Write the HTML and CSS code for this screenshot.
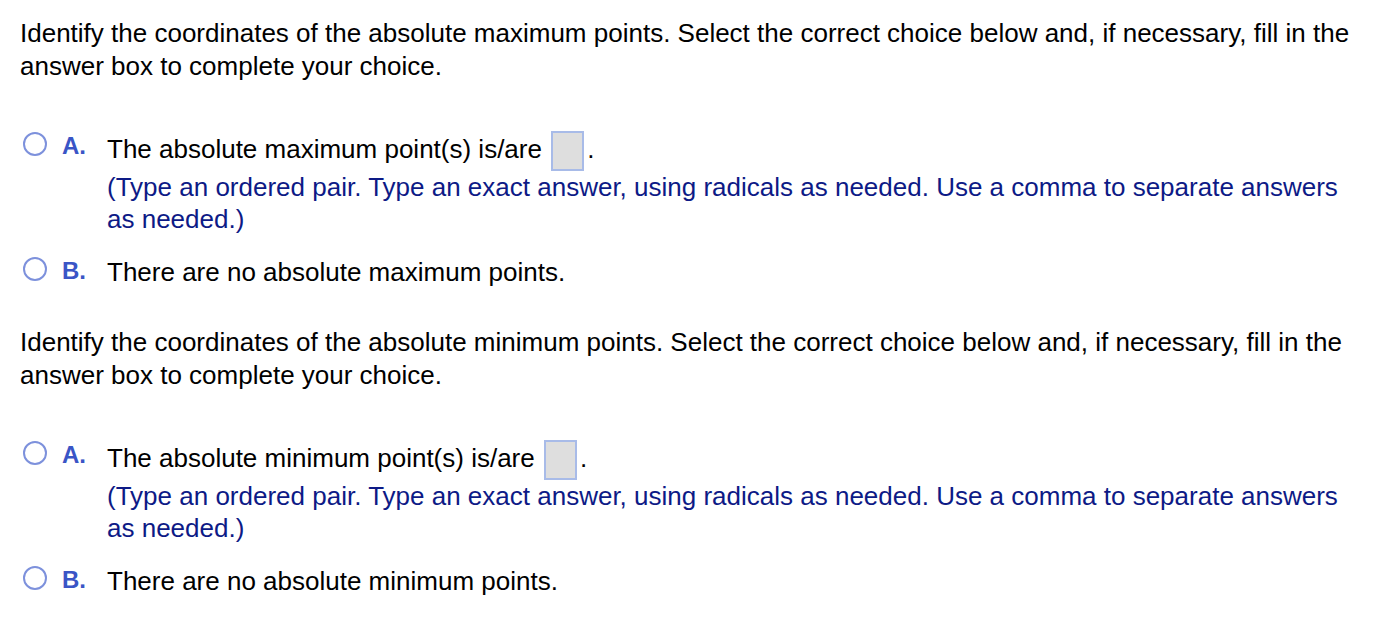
FILE: index.html
```html
<!DOCTYPE html>
<html>
<head>
<meta charset="utf-8">
<link rel="stylesheet" href="styles.css">
</head>
<body>
<div class="page">
  <div class="section">
    <p class="question">Identify the coordinates of the absolute maximum points. Select the correct choice below and, if necessary, fill in the answer box to complete your choice.</p>
    <div class="choices">
      <div class="choice">
        <span class="radio"></span>
        <span class="label">A.</span>
        <div class="content">
          <div class="main">The absolute maximum point(s) is/are <span class="answer-box"></span>.</div>
          <div class="note">(Type an ordered pair. Type an exact answer, using radicals as needed. Use a comma to separate answers as needed.)</div>
        </div>
      </div>
      <div class="choice">
        <span class="radio"></span>
        <span class="label">B.</span>
        <div class="content">
          <div class="main">There are no absolute maximum points.</div>
        </div>
      </div>
    </div>
  </div>
  <div class="section">
    <p class="question">Identify the coordinates of the absolute minimum points. Select the correct choice below and, if necessary, fill in the answer box to complete your choice.</p>
    <div class="choices">
      <div class="choice">
        <span class="radio"></span>
        <span class="label">A.</span>
        <div class="content">
          <div class="main">The absolute minimum point(s) is/are <span class="answer-box"></span>.</div>
          <div class="note">(Type an ordered pair. Type an exact answer, using radicals as needed. Use a comma to separate answers as needed.)</div>
        </div>
      </div>
      <div class="choice">
        <span class="radio"></span>
        <span class="label">B.</span>
        <div class="content">
          <div class="main">There are no absolute minimum points.</div>
        </div>
      </div>
    </div>
  </div>
</div>
</body>
</html>
```
FILE: styles.css
```css
html, body {
  margin: 0;
  padding: 0;
  background: #ffffff;
}
body {
  font-family: "Liberation Sans", Arial, sans-serif;
  font-size: 26px;
  color: #000000;
}
.page {
  padding: 17px 38px 0 20px;
}
.section + .section {
  margin-top: 38px;
}
.question {
  margin: 0;
  line-height: 33px;
}
.choices {
  margin-top: 48px;
}
.choice {
  display: flex;
  align-items: flex-start;
  line-height: 32px;
}
.choice + .choice {
  margin-top: 21px;
}
.radio {
  flex: none;
  width: 24px;
  height: 24px;
  box-sizing: border-box;
  border: 2px solid #7d91dc;
  border-radius: 50%;
  margin-left: 3px;
  margin-top: 1px;
}
.label {
  flex: none;
  width: 45px;
  margin-left: 15px;
  font-size: 24px;
  line-height: 30px;
  font-weight: bold;
  color: #3a55c6;
}
.content {
  flex: 1;
  min-width: 0;
}
.answer-box {
  display: inline-block;
  width: 33px;
  height: 40px;
  box-sizing: border-box;
  border: 2px solid #a8bbe8;
  background: #dedede;
  vertical-align: middle;
  margin-left: 2px;
  margin-right: 3px;
}
.note {
  color: #0d1a86;
}
```
